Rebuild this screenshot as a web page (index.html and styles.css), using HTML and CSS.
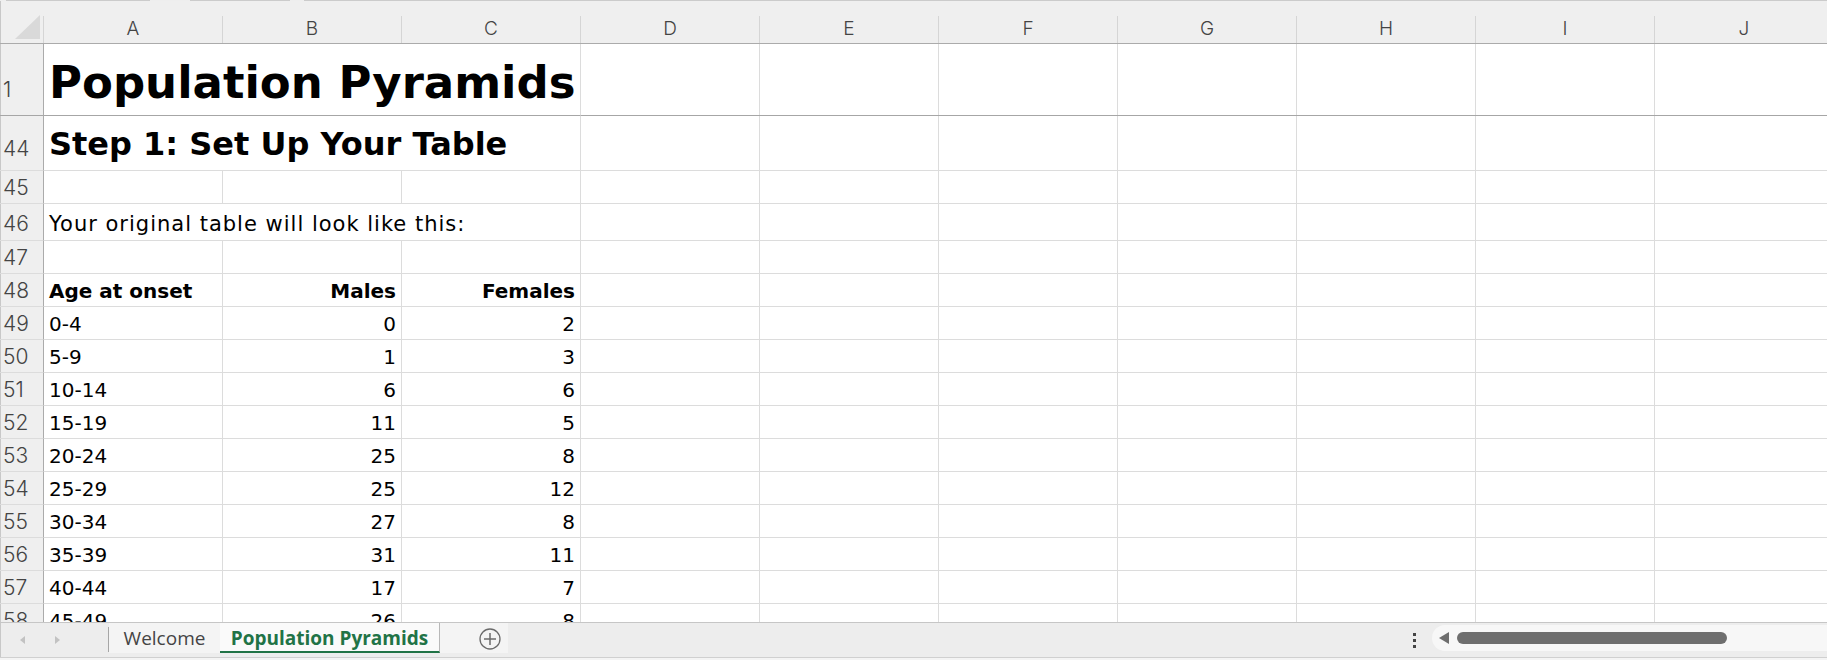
FILE: index.html
```html
<!DOCTYPE html>
<html lang="en">
<head>
    <meta charset="UTF-8">
    <meta name="viewport" content="width=device-width, initial-scale=1.0">
    <title>Population Pyramids</title>
    <link rel="stylesheet" href="styles.css">
</head>
<body>
    <div class="sheet">
        <div class="topline">
            <span class="gap" style="width: 6px"></span>
            <span class="seg" style="width: 144px"></span>
            <span class="gap" style="width: 40px"></span>
            <span class="seg" style="width: 100px"></span>
            <span class="gap" style="width: 14px"></span>
            <span class="seg grow"></span>
        </div>

        <div class="colhead">
            <div class="corner">
                <svg width="44" height="42" viewBox="0 0 44 42">
                    <polygon points="15,38 40,38 40,14" fill="#d9d9d9"/>
                    <line x1="43.5" y1="15" x2="43.5" y2="42" stroke="#d5d5d5"/>
                </svg>
            </div>
            <div class="col">A</div>
            <div class="col">B</div>
            <div class="col">C</div>
            <div class="col">D</div>
            <div class="col">E</div>
            <div class="col">F</div>
            <div class="col">G</div>
            <div class="col">H</div>
            <div class="col">I</div>
            <div class="col">J</div>
        </div>

        <div class="grid">
            <div class="row r-title">
                <div class="num">1</div>
                <div class="cell wide">Population Pyramids</div>
                <div class="rest"></div>
            </div>
            <div class="row r-step">
                <div class="num">44</div>
                <div class="cell wide">Step 1: Set Up Your Table</div>
                <div class="rest"></div>
            </div>
            <div class="row">
                <div class="num">45</div>
                <div class="cell"></div><div class="cell"></div><div class="cell"></div>
                <div class="rest"></div>
            </div>
            <div class="row r-text">
                <div class="num">46</div>
                <div class="cell wide">Your original table will look like this:</div>
                <div class="rest"></div>
            </div>
            <div class="row">
                <div class="num">47</div>
                <div class="cell"></div><div class="cell"></div><div class="cell"></div>
                <div class="rest"></div>
            </div>
            <div class="row">
                <div class="num">48</div>
                <div class="cell b">Age at onset</div>
                <div class="cell b r">Males</div>
                <div class="cell b r">Females</div>
                <div class="rest"></div>
            </div>
            <div class="row">
                <div class="num">49</div>
                <div class="cell">0-4</div><div class="cell r">0</div><div class="cell r">2</div>
                <div class="rest"></div>
            </div>
            <div class="row">
                <div class="num">50</div>
                <div class="cell">5-9</div><div class="cell r">1</div><div class="cell r">3</div>
                <div class="rest"></div>
            </div>
            <div class="row">
                <div class="num">51</div>
                <div class="cell">10-14</div><div class="cell r">6</div><div class="cell r">6</div>
                <div class="rest"></div>
            </div>
            <div class="row">
                <div class="num">52</div>
                <div class="cell">15-19</div><div class="cell r">11</div><div class="cell r">5</div>
                <div class="rest"></div>
            </div>
            <div class="row">
                <div class="num">53</div>
                <div class="cell">20-24</div><div class="cell r">25</div><div class="cell r">8</div>
                <div class="rest"></div>
            </div>
            <div class="row">
                <div class="num">54</div>
                <div class="cell">25-29</div><div class="cell r">25</div><div class="cell r">12</div>
                <div class="rest"></div>
            </div>
            <div class="row">
                <div class="num">55</div>
                <div class="cell">30-34</div><div class="cell r">27</div><div class="cell r">8</div>
                <div class="rest"></div>
            </div>
            <div class="row">
                <div class="num">56</div>
                <div class="cell">35-39</div><div class="cell r">31</div><div class="cell r">11</div>
                <div class="rest"></div>
            </div>
            <div class="row">
                <div class="num">57</div>
                <div class="cell">40-44</div><div class="cell r">17</div><div class="cell r">7</div>
                <div class="rest"></div>
            </div>
            <div class="row">
                <div class="num">58</div>
                <div class="cell">45-49</div><div class="cell r">26</div><div class="cell r">8</div>
                <div class="rest"></div>
            </div>
        </div>

        <div class="tabbar">
            <div class="nav">
                <span class="arrow left"></span>
                <span class="arrow right"></span>
            </div>
            <div class="sep"></div>
            <div class="tab">Welcome</div>
            <div class="tab active">Population Pyramids</div>
            <div class="add">
                <svg width="22" height="30" viewBox="0 0 22 30">
                    <circle cx="11" cy="16" r="10" fill="none" stroke="#6b6b6b" stroke-width="1.3"/>
                    <line x1="5" y1="16" x2="17" y2="16" stroke="#6b6b6b" stroke-width="1.5"/>
                    <line x1="11" y1="10" x2="11" y2="22" stroke="#6b6b6b" stroke-width="1.5"/>
                </svg>
            </div>
            <div class="spacer"></div>
            <div class="more">
                <svg width="4" height="34" viewBox="0 0 4 34">
                    <rect x="0" y="10" width="3" height="3" fill="#444"/>
                    <rect x="0" y="16" width="3" height="3" fill="#444"/>
                    <rect x="0" y="22" width="3" height="3" fill="#444"/>
                </svg>
            </div>
            <div class="track">
                <span class="track-arrow"></span>
                <span class="thumb"></span>
            </div>
        </div>
        <div class="bottomgap"></div>
    </div>
</body>
</html>
```

FILE: styles.css
```css
* {
    box-sizing: border-box;
}

body {
    margin: 0;
    font-family: "DejaVu Sans", "Liberation Sans", sans-serif;
    background: #fff;
    overflow: hidden;
}

.sheet {
    width: 1827px;
    height: 660px;
    display: flex;
    flex-direction: column;
    overflow: hidden;
}

/* thin strip at the very top */
.topline {
    flex: none;
    height: 1px;
    display: flex;
    background: #eeeeee;
}

.topline span {
    display: block;
    height: 1px;
}

.topline .seg {
    background: #cbcbcb;
}

.topline .grow {
    flex: 1;
}

/* column letters */
.colhead {
    flex: none;
    height: 43px;
    display: grid;
    grid-template-columns: 44px repeat(10, 179px);
    background: #efefef;
    border-bottom: 1px solid #ababab;
}

.corner {
    box-shadow: inset 1px 0 #c8c8c8;
}

.corner svg {
    display: block;
}

.col {
    align-self: end;
    height: 27px;
    border-right: 1px solid #d5d5d5;
    display: flex;
    justify-content: center;
    align-items: flex-end;
    padding-bottom: 3px;
    font-family: Inter, "Liberation Sans", sans-serif;
    font-size: 19px;
    font-weight: 300;
    line-height: normal;
    color: #444;
}

/* cells */
.grid {
    flex: 1;
    overflow: hidden;
    display: flex;
    flex-direction: column;
}

.row {
    flex: none;
    height: 33px;
    display: grid;
    grid-template-columns: 44px 179px 179px 179px 1fr;
}

.row > div {
    display: flex;
    align-items: flex-end;
    line-height: normal;
    border-bottom: 1px solid #dcdcdc;
    white-space: nowrap;
}

.num {
    background: #efefef;
    border-right: 1px solid #ababab;
    box-shadow: inset 1px 0 #c8c8c8;
    padding: 0 0 3.5px 3px;
    font-family: Inter, "Liberation Sans", sans-serif;
    font-size: 21px;
    font-weight: 300;
    color: #444;
}

.cell {
    border-right: 1px solid #dcdcdc;
    padding: 0 5px 3.5px;
    font-size: 20px;
    color: #000;
}

.cell.wide {
    grid-column: span 3;
}

.cell.r {
    justify-content: flex-end;
}

.cell.b {
    font-weight: 700;
}

.rest {
    background: repeating-linear-gradient(90deg, transparent 0 178px, #dcdcdc 178px 179px);
}

.r-title {
    height: 72px;
}

.r-title > div {
    border-bottom-color: #a6a6a6;
}

.r-title .cell {
    font-size: 45px;
    font-weight: 700;
    padding-bottom: 6px;
}

.r-title .num {
    padding-bottom: 13px;
}

.r-step {
    height: 55px;
}

.r-step .cell {
    font-size: 32px;
    font-weight: 700;
    padding-bottom: 7px;
}

.r-step .num {
    padding-bottom: 9px;
}

.r-text {
    height: 37px;
}

.r-text .cell {
    font-size: 21px;
    letter-spacing: 1px;
    padding-bottom: 4px;
}

.r-text .num {
    padding-bottom: 4.5px;
}

/* sheet tabs */
.tabbar {
    flex: none;
    height: 36px;
    display: flex;
    align-items: flex-start;
    background: #ededed;
    border-top: 1px solid #c6c6c6;
    border-bottom: 1px solid #d0d0d0;
    box-shadow: inset 1px 0 #c8c8c8;
    font-family: "Open Sans", "Liberation Sans", sans-serif;
}

.nav {
    width: 108px;
    height: 34px;
    display: flex;
    align-items: center;
}

.arrow {
    width: 0;
    height: 0;
    border-top: 4.5px solid transparent;
    border-bottom: 4.5px solid transparent;
}

.arrow.left {
    margin-left: 20px;
    border-right: 5px solid #c2c2c2;
}

.arrow.right {
    margin-left: 30px;
    border-left: 5px solid #c2c2c2;
}

.sep {
    width: 1px;
    height: 25px;
    margin-top: 4px;
    background: #a6a6a6;
}

.tab {
    width: 111px;
    height: 30px;
    display: flex;
    align-items: center;
    justify-content: center;
    background: #f4f4f4;
    font-size: 19px;
    color: #444;
}

.tab.active {
    width: 220px;
    background: #fafafa;
    border-right: 1px solid #b8b8b8;
    border-bottom: 2px solid #217346;
    color: #217346;
    font-weight: 700;
    padding-top: 2px;
}

.add {
    width: 68px;
    height: 30px;
    padding-left: 39px;
    background: #f4f4f4;
}

.add svg {
    display: block;
}

.spacer {
    flex: 1;
}

.more {
    width: 4px;
    margin-right: 15px;
}

.more svg {
    display: block;
}

.track {
    width: 395px;
    height: 26px;
    margin-top: 2px;
    display: flex;
    align-items: center;
    background: #f7f7f7;
    border-radius: 13px 0 0 13px;
}

.track-arrow {
    width: 0;
    height: 0;
    margin-left: 7px;
    border-top: 6px solid transparent;
    border-bottom: 6px solid transparent;
    border-right: 10px solid #6e6e6e;
}

.thumb {
    width: 270px;
    height: 12px;
    margin-left: 8px;
    border-radius: 6px;
    background: #6e6e6e;
}

.bottomgap {
    flex: none;
    height: 2px;
    background: #f4f4f4;
}
```
